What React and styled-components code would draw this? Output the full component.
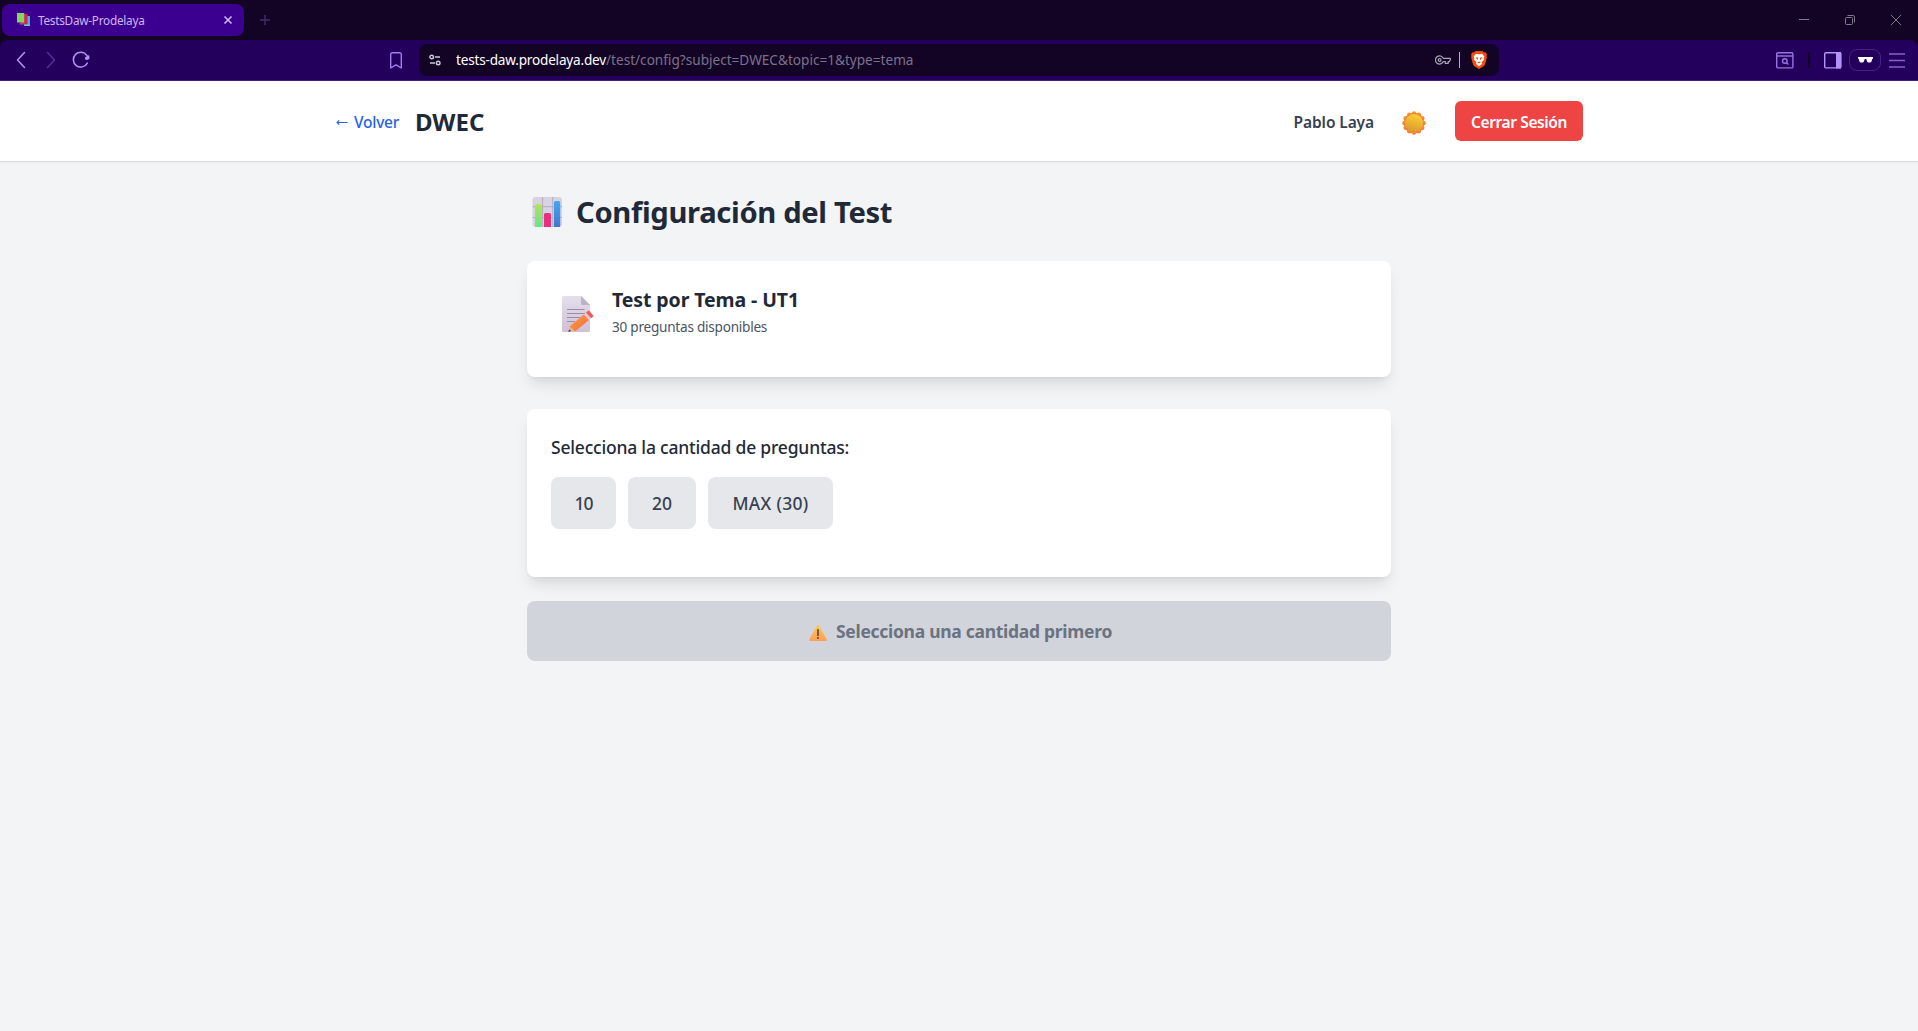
import React from "react";
import styled, { createGlobalStyle } from "styled-components";

const GlobalStyle = createGlobalStyle`
  *, *::before, *::after { box-sizing: border-box; }
  body {
    margin: 0;
    background: #f3f4f6;
    font-family: "Noto Sans", "Open Sans", sans-serif;
    color: #1f2937;
  }
  button { font-family: inherit; border: 0; cursor: pointer; }
  h1, h2, h3, p { margin: 0; }
  svg { display: block; flex: none; }
`;

const Window = styled.div`
  display: flex;
  flex-direction: column;
  height: 1031px;
  overflow: hidden;
`;

/* ---------- browser chrome ---------- */

const TabStrip = styled.div`
  display: flex;
  align-items: center;
  height: 40px;
  padding: 0 18px 0 2px;
  background: #130426;
`;

const Tab = styled.div`
  display: flex;
  align-items: center;
  width: 242px;
  height: 32px;
  padding: 0 10px 0 15px;
  border-radius: 8px;
  background: #3b008f;
`;

const TabTitle = styled.span`
  flex: 1;
  margin-left: 7px;
  font-size: 11.8px;
  letter-spacing: -0.27px;
  line-height: 16px;
  color: #cdb8f5;
`;

const NewTab = styled.div`
  margin-left: 16px;
`;

const WindowControls = styled.div`
  display: flex;
  align-items: center;
  gap: 36px;
  margin-left: auto;
  margin-right: -1px;
`;

const ToolbarBacking = styled.div`
  background: #130426;
`;

const Toolbar = styled.div`
  display: flex;
  align-items: center;
  height: 41px;
  padding: 0 13px 0 12px;
  border-bottom: 1px solid #4a1d82;
  border-radius: 8px 8px 0 0;
  background: #23005c;
`;

const NavButtons = styled.div`
  display: flex;
  align-items: center;
  gap: 12px;
  width: 378px;
`;

const AddressBar = styled.div`
  display: flex;
  align-items: center;
  width: 1080px;
  height: 32px;
  margin-left: 17px;
  padding: 0 12px 0 10px;
  border-radius: 8px;
  background: #130426;
`;

const Url = styled.div`
  flex: 1;
  margin-left: 15px;
  font-size: 13.6px;
  line-height: 20px;
  color: #7c718b;
`;

const Host = styled.span`
  letter-spacing: -0.2px;
  color: #ffffff;
`;

const AddressDivider = styled.span`
  width: 1px;
  height: 16px;
  margin: 0 11px 0 8px;
  background: #b4aec0;
`;

const ToolbarTools = styled.div`
  display: flex;
  align-items: center;
  margin-left: auto;
`;

const ToolDivider = styled.span`
  width: 2px;
  height: 16px;
  margin: 0 14px;
  background: #130426;
`;

const PrivatePill = styled.span`
  display: flex;
  align-items: center;
  justify-content: center;
  width: 32px;
  height: 22px;
  margin: 0 8px 0 7px;
  border: 1px solid #47208a;
  border-radius: 8px;
`;

/* ---------- page ---------- */

const Header = styled.header`
  height: 80px;
  flex: none;
  background: #ffffff;
  box-shadow: 0 1px 0 #d9dce0, 0 2px 2px rgba(0, 0, 0, 0.04);
`;

const HeaderInner = styled.div`
  display: flex;
  align-items: center;
  justify-content: space-between;
  width: 1280px;
  height: 80px;
  margin: 0 auto;
  padding: 0 16px;
`;

const HeaderGroup = styled.div`
  display: flex;
  align-items: center;
`;

const BackLink = styled.a`
  display: flex;
  align-items: center;
  gap: 6px;
  margin-right: 16px;
  padding: 1px 0 0 1px;
  font-size: 15.5px;
  font-weight: 500;
  letter-spacing: -0.25px;
  line-height: 24px;
  color: #2563eb;
`;

const Subject = styled.h1`
  padding-top: 2px;
  font-size: 24px;
  font-weight: 700;
  line-height: 32px;
`;

const UserName = styled.span`
  padding-top: 1px;
  font-size: 15.5px;
  font-weight: 600;
  letter-spacing: -0.1px;
  line-height: 24px;
  color: #374151;
`;

const ThemeToggle = styled.button`
  display: flex;
  padding: 4px 0 0;
  margin: 0 29.500px 0 27.500px;
  background: none;
`;

const LogoutButton = styled.button`
  width: 128px;
  height: 40px;
  padding: 1px 0 0;
  border-radius: 6px;
  background: #ef4444;
  color: #ffffff;
  font-size: 15.5px;
  font-weight: 600;
  letter-spacing: -0.38px;
  line-height: 24px;
`;

const Main = styled.main`
  width: 896px;
  margin: 0 auto;
  padding: 32px 16px;
`;

const Title = styled.h2`
  display: flex;
  align-items: center;
  gap: 13px;
  height: 36px;
  padding: 2px 0 0 5px;
  margin-bottom: 32px;
  font-size: 29.2px;
  font-weight: 700;
  letter-spacing: -0.34px;
  line-height: 36px;
`;

const Card = styled.section`
  padding: 24px;
  margin-bottom: ${(p) => p.$gap}px;
  border-radius: 8px;
  background: #ffffff;
  box-shadow: 0 10px 15px -3px rgba(0, 0, 0, 0.1), 0 4px 6px -4px rgba(0, 0, 0, 0.1);
`;

const Summary = styled.div`
  display: flex;
  align-items: center;
  gap: 18px;
  padding: 0 0 0 11px;
  margin-bottom: 16px;
`;

const SummaryIcon = styled.span`
  padding-top: 5px;
`;

const SummaryTitle = styled.h3`
  padding-top: 1px;
  font-size: 19.5px;
  font-weight: 700;
  letter-spacing: -0.1px;
  line-height: 28px;
`;

const SummaryText = styled.p`
  margin-top: 3px;
  font-size: 13.6px;
  letter-spacing: -0.25px;
  line-height: 20px;
  color: #4b5563;
`;

const Label = styled.p`
  margin-bottom: 16px;
  font-size: 17.5px;
  font-weight: 500;
  letter-spacing: -0.2px;
  line-height: 28px;
`;

const Options = styled.div`
  display: flex;
  gap: 12px;
  margin-bottom: 24px;
`;

const Option = styled.button`
  width: ${(p) => p.$width}px;
  height: 52px;
  padding: 0;
  border-radius: 8px;
  background: #e5e7eb;
  color: #374151;
  font-size: 17.5px;
  font-weight: 500;
  letter-spacing: ${(p) => p.$tracking || 0}px;
  line-height: 28px;
`;

const StartButton = styled.button`
  display: flex;
  align-items: center;
  justify-content: center;
  gap: 9px;
  width: 100%;
  height: 60px;
  padding: 0 0 0 3px;
  border-radius: 8px;
  background: #d1d5db;
  color: #6b7280;
  font-size: 17.5px;
  font-weight: 700;
  letter-spacing: -0.29px;
  line-height: 28px;
  cursor: not-allowed;
`;

const WarningMark = styled.span`
  padding-top: 4px;
`;

/* ---------- drawings ---------- */

const Favicon = () => (
  <svg width="14" height="14" viewBox="0 0 14 14">
    <path d="M7 3h6v10H7z" fill="#35b6e8" />
    <path d="M4 1h6.5v10.5H4z" fill="#d9234f" />
    <path d="M2.5 10h4v1.5h-4z" fill="#b04a78" />
    <path d="M0 0h7.2v9.5H0z" fill="#86d65e" />
    <path d="M7 11.5h6V13H8z" fill="#8fb9c9" />
  </svg>
);

const TabClose = () => (
  <svg width="12" height="12" viewBox="0 0 12 12" stroke="#cdb8f5" strokeWidth="1.6">
    <path d="M2.5 2.5l7 7M9.5 2.5l-7 7" />
  </svg>
);

const Plus = () => (
  <svg width="10" height="10" viewBox="0 0 10 10" stroke="#442d69" strokeWidth="1.4">
    <path d="M5 0v10M0 5h10" />
  </svg>
);

const Minimize = () => (
  <svg width="10" height="10" viewBox="0 0 10 10" stroke="#81788d">
    <path d="M0 4.5h10" />
  </svg>
);

const Restore = () => (
  <svg width="10" height="10" viewBox="0 0 10 10" fill="none" stroke="#81788d">
    <rect x=".5" y="2.5" width="7" height="7" rx="1" />
    <path d="M2.5 .5H8A1.5 1.5 0 0 1 9.5 2v5.5" />
  </svg>
);

const CloseWindow = () => (
  <svg width="10" height="10" viewBox="0 0 10 10" stroke="#81788d">
    <path d="M0 0l10 10M10 0L0 10" />
  </svg>
);

const Chevron = ({ color, forward }) => (
  <svg width="18" height="18" viewBox="0 0 18 18" fill="none" stroke={color} strokeWidth="1.5" strokeLinecap="round" strokeLinejoin="round">
    <path d={forward ? "M5.5 1.5l7 7.5-7 7.5" : "M12.5 1.5l-7 7.5 7 7.5"} />
  </svg>
);

const Reload = () => (
  <svg width="18" height="18" viewBox="0 0 18 18" fill="none" stroke="#b294f7" strokeWidth="1.5" strokeLinecap="round">
    <path d="M15.3 12.1A7.4 7.4 0 1 1 14.8 4.4L15.6 5.6" />
    <circle cx="14.8" cy="7.2" r="1.8" fill="#b294f7" stroke="none" />
    <path d="M16.6 5v2.4h-2" />
  </svg>
);

const Bookmark = () => (
  <svg width="12" height="17" viewBox="0 0 12 17" fill="none" stroke="#a07cf0" strokeWidth="1.4" strokeLinejoin="round">
    <path d="M2.2 .7h7.6a1.5 1.5 0 0 1 1.5 1.5V16L6 12.8 .7 16V2.2A1.5 1.5 0 0 1 2.2 .7z" />
  </svg>
);

const SiteSettings = () => (
  <svg width="12" height="12" viewBox="0 0 12 12" fill="none" stroke="#cdc9d4" strokeWidth="1.4">
    <circle cx="2.7" cy="3" r="1.8" />
    <path d="M6 3h5M1 9h5" />
    <circle cx="9.2" cy="9" r="1.8" />
  </svg>
);

const KeyIcon = () => (
  <svg width="16" height="10" viewBox="0 0 16 10" fill="none" stroke="#a9a3b3" strokeWidth="1.2" strokeLinejoin="round">
    <path d="M8.3 3.3A4.1 4.1 0 1 0 8.3 6.6H10.3V8.4H13.2V6.6H14.2L15.3 5V3.3z" />
    <circle cx="4.6" cy="5" r="1.4" />
  </svg>
);

const BraveShield = () => (
  <svg width="16" height="18" viewBox="0 0 16 18">
    <path d="M4.5 0h7l1.3 1.5 1.7-.2L16 3.5l-.5 1.5.4 1.3-1.800 6.7c-.3 1-.8 1.6-1.6 2.2L8 18l-4.5-2.800c-.8-.6-1.3-1.2-1.6-2.2L.1 6.3.5 5 0 3.5l1.5-2.2 1.7.2z" fill="#fb4a0b" />
    <path d="M5 2.8l3 .5 3-.5 2.3 2.700-.6 2.3.3 1-2.3 2.3L11 13 8 15.2 5 13l.3-1.900L3 8.800l.3-1-.6-2.3z" fill="#fff" />
    <path d="M4.7 6l2.3.7v2.5L5.5 7.6zM11.3 6L9 6.7v2.500l1.5-1.6zM6.3 11.2L8 10.500l1.7.7L8 12.600z" fill="#fb4a0b" />
  </svg>
);

const SearchTabs = () => (
  <svg width="18" height="17" viewBox="0 0 18 17" fill="none" stroke="#9673e6" strokeWidth="1.4">
    <rect x=".7" y=".7" width="16.2" height="15.2" rx="1.2" />
    <path d="M1 4h16" />
    <circle cx="8.8" cy="9" r="2.3" />
    <path d="M10.5 10.7l1.8 1.8" />
  </svg>
);

const SidePanel = () => (
  <svg width="18" height="17" viewBox="0 0 18 17">
    <rect x=".7" y=".7" width="16.2" height="15.2" rx="1.2" fill="none" stroke="#b294f7" strokeWidth="1.4" />
    <path d="M12 0h5v16.5h-5z" fill="#b294f7" />
  </svg>
);

const Glasses = () => (
  <svg width="15" height="6" viewBox="0 0 15 6" fill="#fff">
    <path d="M0 0h15v1.500l-.8.4-.5 2.2c-.2.8-.7 1.3-1.5 1.3h-1.5c-.8 0-1.4-.4-1.7-1.2L8.3 2H6.7L6 4.200c-.3.8-.9 1.2-1.7 1.200H2.800c-.8 0-1.3-.5-1.5-1.300L.8 1.900 0 1.500z" />
  </svg>
);

const MenuIcon = () => (
  <svg width="16" height="15" viewBox="0 0 16 15" stroke="#8361d0" strokeWidth="1.5">
    <path d="M0 1h16M0 7.5h16M0 14h16" />
  </svg>
);

const LeftArrow = () => (
  <svg width="12" height="8" viewBox="0 0 12 8" fill="none" stroke="#2563eb" strokeWidth="1.1">
    <path d="M11.5 4.5H1M3.2 2.3L1 4.5l2.200 2.200" />
  </svg>
);

const SUN_RAYS = Array.from({ length: 12 }, (_, i) => (i * Math.PI) / 6);

const Sun = () => (
  <svg width="24" height="24" viewBox="0 0 24 24">
    <defs>
      <linearGradient id="sunFace" x1=".65" y1="0" x2=".35" y2="1">
        <stop offset="0" stopColor="#ffcf36" />
        <stop offset="1" stopColor="#d9982c" />
      </linearGradient>
      <linearGradient id="sunRays" x1="0" y1="0" x2="0" y2="1">
        <stop offset="0" stopColor="#fb9a2b" />
        <stop offset="1" stopColor="#ee7340" />
      </linearGradient>
    </defs>
    <g fill="url(#sunRays)">
      <circle cx="12" cy="12" r="10.4" />
      {SUN_RAYS.map((a) => (
        <circle key={a} cx={12 + 9.6 * Math.sin(a)} cy={12 - 9.6 * Math.cos(a)} r="2.2" />
      ))}
    </g>
    <circle cx="12" cy="12" r="9" fill="url(#sunFace)" />
  </svg>
);

const BarChart = () => (
  <svg width="31" height="30" viewBox="0 0 31 30">
    <defs>
      <linearGradient id="barGreen" x1="0" y1="0" x2="0" y2="1">
        <stop offset="0" stopColor="#b4e356" />
        <stop offset="1" stopColor="#66e38d" />
      </linearGradient>
      <linearGradient id="barBlue" x1="0" y1="0" x2="0" y2="1">
        <stop offset="0" stopColor="#3fa9f7" />
        <stop offset="1" stopColor="#4078cf" />
      </linearGradient>
    </defs>
    <rect x=".5" width="29.5" height="30" rx="3" fill="#d9d2e0" />
    <path d="M10.500 0v30M20.700 0v30M.5 9.700h29.500M.5 20.500h29.500" stroke="#b9b1c3" strokeWidth="1.2" />
    <path d="M3 8.500A1.5 1.5 0 0 1 4.500 7h3.700a1.5 1.5 0 0 1 1.500 1.500V30H4a1 1 0 0 1-1-1z" fill="url(#barGreen)" />
    <path d="M12 17.500a1.5 1.5 0 0 1 1.500-1.500h4a1.5 1.5 0 0 1 1.500 1.500V30h-7z" fill="#e6327c" />
    <path d="M22 5.500A1.5 1.5 0 0 1 23.500 4h3.200a1.5 1.5 0 0 1 1.500 1.500V29a1 1 0 0 1-1 1H22z" fill="url(#barBlue)" />
  </svg>
);

const Memo = () => (
  <svg width="32" height="36" viewBox="0 0 32 36">
    <defs>
      <linearGradient id="paper" x1="0" y1="0" x2="0" y2="1">
        <stop offset="0" stopColor="#e4dfec" />
        <stop offset="1" stopColor="#cfc0d8" />
      </linearGradient>
      <linearGradient id="pencil" x1="0" y1="0" x2="1" y2="1">
        <stop offset="0" stopColor="#ffa141" />
        <stop offset="1" stopColor="#f4683c" />
      </linearGradient>
    </defs>
    <path d="M1.500 0H19l9 9v25.500a1.500 1.500 0 0 1-1.500 1.500h-25A1.500 1.500 0 0 1 0 34.500v-33A1.500 1.500 0 0 1 1.500 0z" fill="url(#paper)" />
    <path d="M19 0l9 9h-7.500A1.500 1.500 0 0 1 19 7.500z" fill="#bcb3c5" />
    <path d="M5 13.500h17.500M5 17.500h18M5 21.500h13M5 25.500h8" stroke="#998ea4" strokeWidth="1.2" />
    <path d="M6.500 35.500l1.500-5.500 5 5z" fill="#e6b48f" />
    <path d="M6.300 36l.8-2.600 2 1.700z" fill="#4a2a4a" />
    <path d="M7.600 30.600L22 18.300l5 5.700-13.700 11.200z" fill="url(#pencil)" />
    <path d="M22 18.300l2-1.700 5 5.700-2 1.700z" fill="#dccbe6" />
    <path d="M24 16.600l1.600-1.400c.8-.6 1.500-.6 2.200.2l3 3.500c.6.700.5 1.500-.2 2.100L29 22.300z" fill="#fb5750" />
  </svg>
);

const Warning = () => (
  <svg width="18" height="16" viewBox="0 0 18 16">
    <defs>
      <linearGradient id="warn" x1="0" y1="0" x2="0" y2="1">
        <stop offset="0" stopColor="#ffc84a" />
        <stop offset="1" stopColor="#ff9f55" />
      </linearGradient>
    </defs>
    <path d="M8 .7c.5-.9 1.500-.9 2 0l7.700 13.600c.5.900 0 1.700-1 1.700H1.300c-1 0-1.500-.8-1-1.700z" fill="url(#warn)" />
    <path d="M9 4.700v5.800" stroke="#4b3a4a" strokeWidth="1.5" strokeLinecap="round" />
    <circle cx="9" cy="13" r=".9" fill="#4b3a4a" />
  </svg>
);

/* ---------- view ---------- */

const AMOUNTS = [
  { label: "10", width: 65, tracking: -1 },
  { label: "20", width: 68, tracking: 0 },
  { label: "MAX (30)", width: 125, tracking: 0.3 },
];

function BrowserChrome() {
  return (
    <>
      <TabStrip>
        <Tab>
          <Favicon />
          <TabTitle>TestsDaw-Prodelaya</TabTitle>
          <TabClose />
        </Tab>
        <NewTab>
          <Plus />
        </NewTab>
        <WindowControls>
          <Minimize />
          <Restore />
          <CloseWindow />
        </WindowControls>
      </TabStrip>
      <ToolbarBacking>
        <Toolbar>
          <NavButtons>
            <Chevron color="#b294f7" />
            <Chevron color="#55309a" forward />
            <Reload />
          </NavButtons>
          <Bookmark />
          <AddressBar>
            <SiteSettings />
            <Url>
              <Host>tests-daw.prodelaya.dev</Host>/test/config?subject=DWEC&amp;topic=1&amp;type=tema
            </Url>
            <KeyIcon />
            <AddressDivider />
            <BraveShield />
          </AddressBar>
          <ToolbarTools>
            <SearchTabs />
            <ToolDivider />
            <SidePanel />
            <PrivatePill>
              <Glasses />
            </PrivatePill>
            <MenuIcon />
          </ToolbarTools>
        </Toolbar>
      </ToolbarBacking>
    </>
  );
}

export default function App() {
  return (
    <Window>
      <GlobalStyle />
      <BrowserChrome />
      <Header>
        <HeaderInner>
          <HeaderGroup>
            <BackLink>
              <LeftArrow />
              Volver
            </BackLink>
            <Subject>DWEC</Subject>
          </HeaderGroup>
          <HeaderGroup>
            <UserName>Pablo Laya</UserName>
            <ThemeToggle>
              <Sun />
            </ThemeToggle>
            <LogoutButton>Cerrar Sesión</LogoutButton>
          </HeaderGroup>
        </HeaderInner>
      </Header>
      <Main>
        <Title>
          <BarChart />
          Configuración del Test
        </Title>
        <Card $gap={32}>
          <Summary>
            <SummaryIcon>
              <Memo />
            </SummaryIcon>
            <div>
              <SummaryTitle>Test por Tema - UT1</SummaryTitle>
              <SummaryText>30 preguntas disponibles</SummaryText>
            </div>
          </Summary>
        </Card>
        <Card $gap={24}>
          <Label>Selecciona la cantidad de preguntas:</Label>
          <Options>
            {AMOUNTS.map((a) => (
              <Option key={a.label} $width={a.width} $tracking={a.tracking}>
                {a.label}
              </Option>
            ))}
          </Options>
        </Card>
        <StartButton>
          <WarningMark>
            <Warning />
          </WarningMark>
          Selecciona una cantidad primero
        </StartButton>
      </Main>
    </Window>
  );
}
